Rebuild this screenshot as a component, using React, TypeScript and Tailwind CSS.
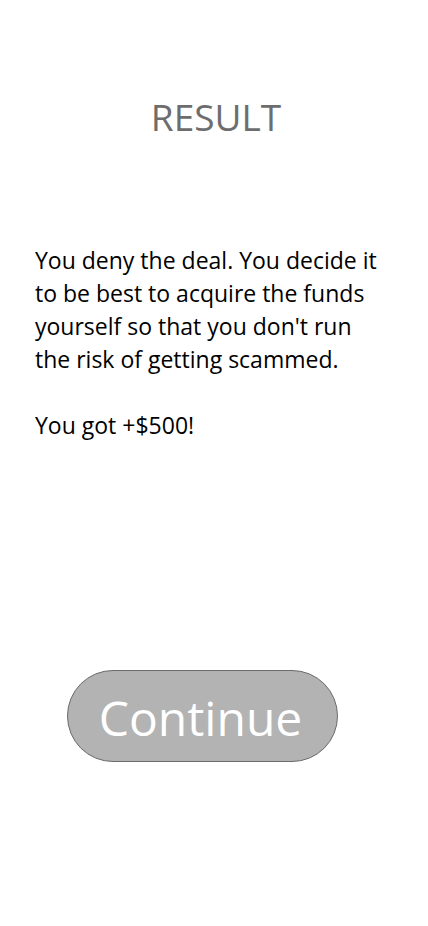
export default function App() {
  return (
    <div className="w-[428px] h-[926px] bg-white flex flex-col" style={{ fontFamily: '"Open Sans", "Noto Sans", sans-serif' }}>
      <h1 className="mt-[92px] text-center text-[37px] leading-[50px] text-[#6d6d6d] pl-[4px]">RESULT</h1>
      <div className="mt-[102px] pl-[35px] pr-[38px] text-[23px] leading-[33px] text-black">
        <p>You deny the deal. You decide it to be best to acquire the funds yourself so that you don't run the risk of getting scammed.</p>
        <p className="mt-[33px]">You got +$500!</p>
      </div>
      <div className="mt-[228px] pl-[67px]">
        <button className="w-[271px] h-[92px] rounded-full bg-[#b3b3b3] border border-[#6b6b6b] text-white text-[48px] leading-none pt-[4px] pr-[4px]">
          Continue
        </button>
      </div>
    </div>
  )
}
